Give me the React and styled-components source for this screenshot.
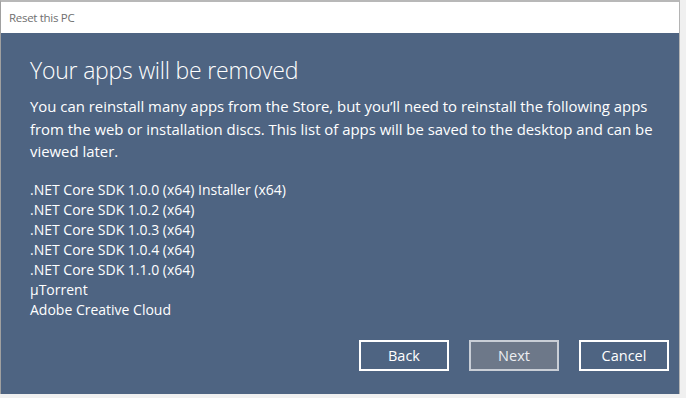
import React from 'react';
import styled, { createGlobalStyle } from 'styled-components';

const GlobalStyle = createGlobalStyle`
  html, body {
    margin: 0;
    padding: 0;
    background: #f0f0f0;
  }
  body {
    font-family: "Open Sans", "Noto Sans", sans-serif;
  }
`;

const Window = styled.div`
  width: 680px;
  height: 394px;
  border-left: 1px solid #a0a0a0;
  border-right: 1px solid #b4b4b4;
  border-top: 2px solid #b8b8b8;
  display: flex;
  flex-direction: column;
  box-sizing: border-box;
`;

const TitleBar = styled.div`
  height: 31px;
  background: #fff;
  display: flex;
  align-items: center;
  padding-left: 8px;
  font-size: 11.5px;
  color: #707070;
  letter-spacing: -0.3px;
`;

const Body = styled.div`
  flex: 1;
  background: #4e6482;
  color: #fff;
  padding: 21px 0 0 29px;
  display: flex;
  flex-direction: column;
`;

const Heading = styled.h1`
  margin: 0;
  font-weight: 300;
  font-size: 23px;
  line-height: 32px;
  letter-spacing: -0.2px;
`;

const Para = styled.p`
  margin: 9px 0 0;
  font-size: 14.9px;
  line-height: 22.5px;
  white-space: nowrap;
`;

const AppList = styled.ul`
  list-style: none;
  margin: 17px 0 0;
  padding: 0;
  font-size: 14px;
  line-height: 20px;
`;

const ButtonRow = styled.div`
  display: flex;
  justify-content: flex-end;
  gap: 20px;
  margin-top: 20px;
  padding-right: 10px;
`;

const Button = styled.button`
  width: 90px;
  height: 31px;
  box-sizing: border-box;
  border: 2px solid ${p => (p.$muted ? '#c9ced6' : '#ffffff')};
  background: ${p => (p.$muted ? '#6d7889' : 'transparent')};
  color: ${p => (p.$muted ? '#eceef1' : '#ffffff')};
  font-family: inherit;
  font-size: 14.5px;
  padding: 0;
`;

const apps = [
  '.NET Core SDK 1.0.0 (x64) Installer (x64)',
  '.NET Core SDK 1.0.2 (x64)',
  '.NET Core SDK 1.0.3 (x64)',
  '.NET Core SDK 1.0.4 (x64)',
  '.NET Core SDK 1.1.0 (x64)',
  'µTorrent',
  'Adobe Creative Cloud',
];

export default function App() {
  return (
    <>
      <GlobalStyle />
      <Window>
        <TitleBar>Reset this PC</TitleBar>
        <Body>
          <Heading>Your apps will be removed</Heading>
          <Para>
            You can reinstall many apps from the Store, but you’ll need to reinstall the following apps
            <br />
            from the web or installation discs. This list of apps will be saved to the desktop and can be
            <br />
            viewed later.
          </Para>
          <AppList>
            {apps.map(a => (
              <li key={a}>{a}</li>
            ))}
          </AppList>
          <ButtonRow>
            <Button>Back</Button>
            <Button $muted>Next</Button>
            <Button>Cancel</Button>
          </ButtonRow>
        </Body>
      </Window>
    </>
  );
}
